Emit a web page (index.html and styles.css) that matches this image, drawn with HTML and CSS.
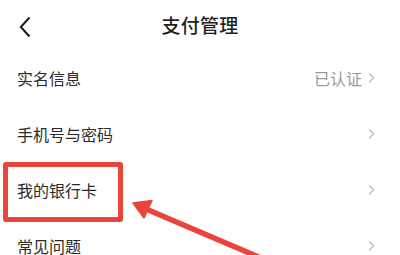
FILE: index.html
```html
<!DOCTYPE html>
<html lang="zh">
<head>
<meta charset="utf-8">
<link rel="stylesheet" href="styles.css">
</head>
<body>
<div class="page">
  <header class="nav">
    <svg class="back" width="12" height="22" viewBox="0 0 12 22"><path d="M10.5 1.5 L1.8 11 L10.5 20.5" fill="none" stroke="#1a1a1a" stroke-width="2"/></svg>
    <h1 class="title">支付管理</h1>
  </header>
  <ul class="list">
    <li class="row"><span class="label">实名信息</span><span class="right"><span class="value">已认证</span><svg class="chev" width="9" height="12" viewBox="0 0 9 12"><path d="M2 1.5 L6.5 6 L2 10.5" fill="none" stroke="#c4c4c4" stroke-width="1.5"/></svg></span></li>
    <li class="row"><span class="label">手机号与密码</span><span class="right"><svg class="chev" width="9" height="12" viewBox="0 0 9 12"><path d="M2 1.5 L6.5 6 L2 10.5" fill="none" stroke="#c4c4c4" stroke-width="1.5"/></svg></span></li>
    <li class="row"><span class="label">我的银行卡</span><span class="right"><svg class="chev" width="9" height="12" viewBox="0 0 9 12"><path d="M2 1.5 L6.5 6 L2 10.5" fill="none" stroke="#c4c4c4" stroke-width="1.5"/></svg></span></li>
    <li class="row"><span class="label">常见问题</span><span class="right"><svg class="chev" width="9" height="12" viewBox="0 0 9 12"><path d="M2 1.5 L6.5 6 L2 10.5" fill="none" stroke="#c4c4c4" stroke-width="1.5"/></svg></span></li>
  </ul>
  <div class="highlight"></div>
  <svg class="arrow" width="400" height="255" viewBox="0 0 400 255">
    <line x1="146" y1="209" x2="275" y2="264" stroke="#e8463b" stroke-width="5.5" stroke-linecap="round"/>
    <polygon points="133,203 152,200.5 144,218" fill="#e8463b" stroke="#e8463b" stroke-width="1.5" stroke-linejoin="round"/>
  </svg>
</div>
</body>
</html>
```
FILE: styles.css
```css
html, body {
  margin: 0;
  padding: 0;
  background: #fff;
}
.page {
  position: relative;
  width: 400px;
  height: 255px;
  overflow: hidden;
  font-family: "Noto Sans CJK SC", "Noto Sans", sans-serif;
  color: #2b2b2b;
}
.nav {
  height: 50px;
  display: flex;
  align-items: center;
  justify-content: center;
  position: relative;
}
.back {
  position: absolute;
  left: 19px;
  top: 16px;
}
.title {
  margin: 0;
  font-size: 19px;
  font-weight: 500;
  color: #1f1f1f;
  letter-spacing: 0.3px;
  margin-top: -2px;
}
.list {
  list-style: none;
  margin: 0;
  padding: 0;
}
.row {
  height: 56px;
  display: flex;
  align-items: center;
  justify-content: space-between;
  padding: 0 24px 0 17px;
}
.label {
  font-size: 16px;
  color: #2b2b2b;
}
.right {
  display: flex;
  align-items: center;
  gap: 5px;
}
.value {
  font-size: 16px;
  color: #9a9a9a;
}
.chev {
  display: block;
}
.highlight {
  position: absolute;
  left: 3px;
  top: 162px;
  width: 110px;
  height: 50px;
  border: 5px solid #e8463b;
  border-radius: 3px;
}
.arrow {
  position: absolute;
  left: 0;
  top: 0;
}
```
